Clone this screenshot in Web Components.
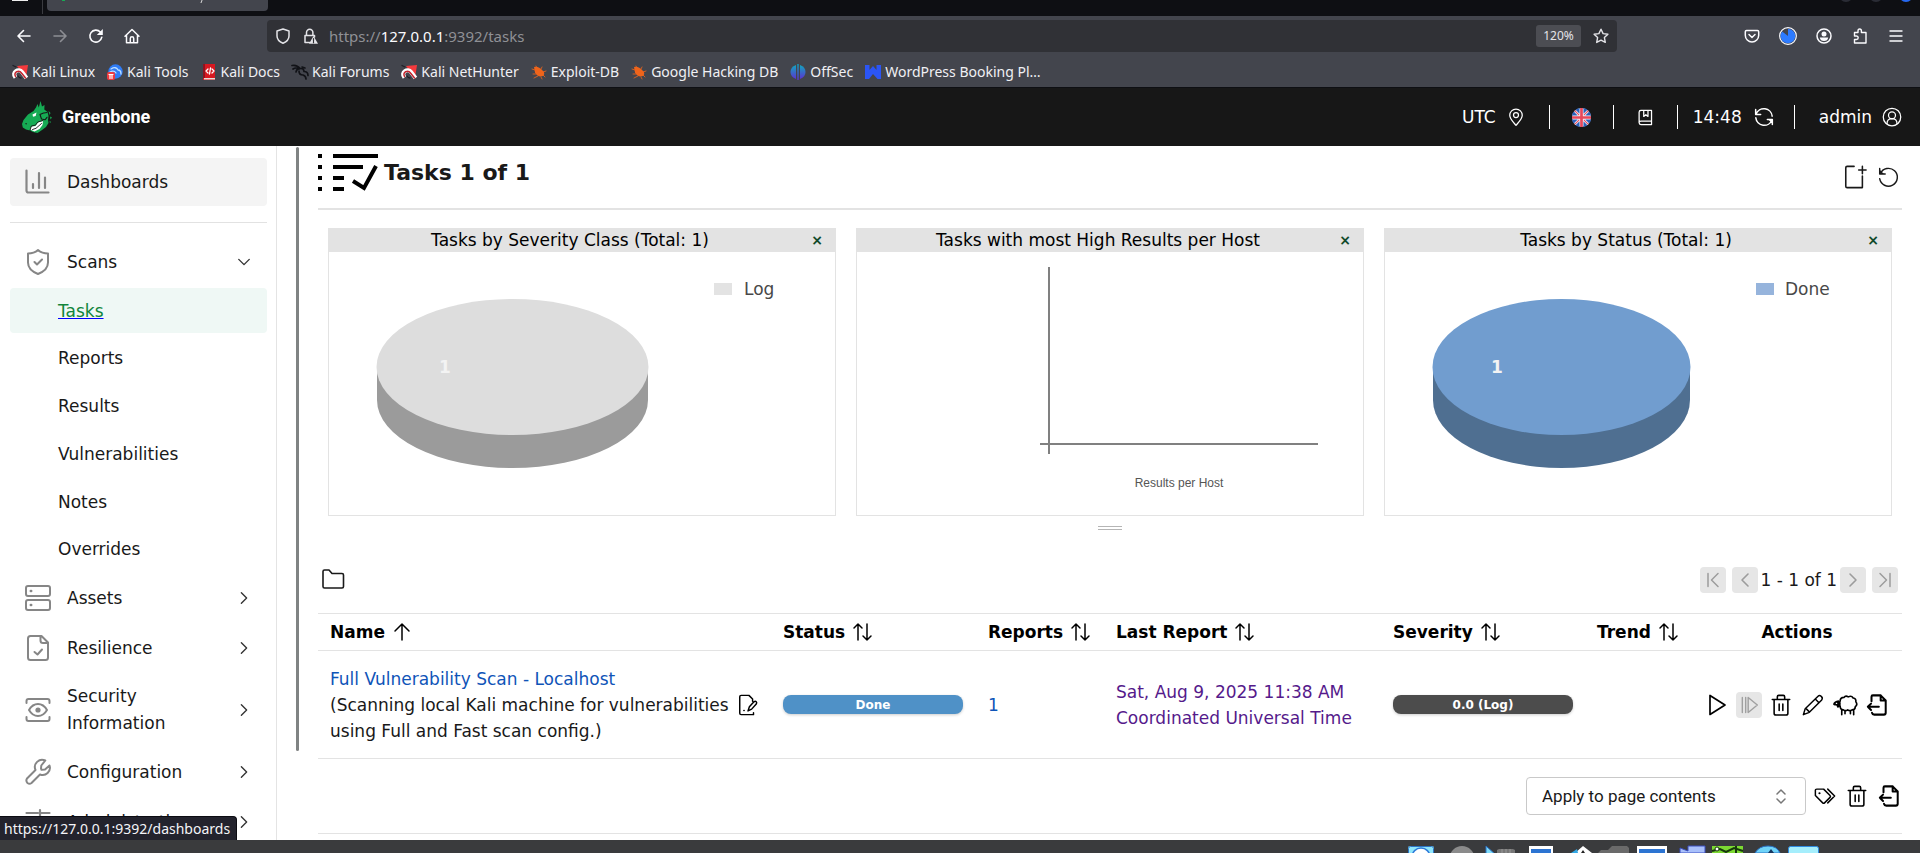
<!DOCTYPE html>
<html lang="en">
<head>
<meta charset="utf-8">
<title>Tasks</title>
<style>
html,body{margin:0;height:100%;overflow:hidden}
body{font:17px/26px "DejaVu Sans",Verdana,sans-serif;color:#191919;background:#fff}
</style>
</head>
<body>
<app-root></app-root>
<script>
const ICONS={
back:'<g stroke-width="1.6"><path d="M14 8H2.5M7.5 2.5 2 8l5.5 5.5"/></g>',
forward:'<g stroke-width="1.6"><path d="M2 8h11.500M8.500 2.500 14 8l-5.500 5.500"/></g>',
reload:'<path stroke-width="1.600" d="M13.800 9.200A6 6 0 1 1 12.300 4"/><path fill="currentColor" stroke="none" d="M14.800 1v6H8.800z"/>',
home:'<path stroke-width="1.500" d="M1 8.200 8 1.500l7 6.700M2.500 7v7.700h11V7M6.300 14.500v-4q0-1.700 1.700-1.700t1.700 1.700v4"/>',
shield:'<path stroke-width="1.500" d="M8 1 14 3v5c0 3.500-3 6-6 7.200C5 14 2 11.500 2 8V3z"/>',
lock:'<path stroke-width="1.500" d="M7.500 14.500H3V7.500h9.500V9M4.500 7.500V4.500a3.200 3.200 0 0 1 6.400 0v3"/><path fill="currentColor" stroke="none" d="M11.500 8 16 15.800H7z"/><path stroke="#303136" stroke-width="1.200" d="M11.500 10.500v2.200m0 1v1"/>',
star:'<path stroke-width="1.400" d="m8 1.200 2.100 4.400 4.800.600-3.500 3.400.900 4.800L8 12.100l-4.300 2.300.900-4.800L1.100 6.200l4.800-.600z"/>',
pocket:'<path stroke-width="1.500" d="M2.500 2.500h11q1.200 0 1.200 1.200v3.500a6.700 6.700 0 0 1-13.400 0V3.700q0-1.200 1.200-1.200zM5 6.500l3 3 3-3"/>',
usage:'<circle cx="8" cy="8" r="7.400" stroke-width="1.100"/><path fill="#2d7bff" stroke="none" d="M8 8V1.500A6.500 6.500 0 1 1 2.800 4z"/>',
account:'<circle cx="8" cy="8" r="7" stroke-width="1.500"/><circle cx="8" cy="6" r="2.500" fill="currentColor" stroke="none"/><path fill="currentColor" stroke="none" d="M3.800 9.500h8.400q-.500 3.500-4.200 3.500T3.800 9.500z"/>',
puzzle:'<path stroke-width="1.400" d="M6 4.500V3q0-2 1.700-2t1.700 2v1.500H14V15H2.500v-3.500h2q1.700 0 1.700-1.700T4.500 8h-2V4.500z"/>',
menu:'<path stroke-width="1.400" d="M2 3h12M2 8h12M2 13h12"/>',
kali:'<path fill="#f43a3d" stroke="none" d="M5 2 16 1l-2 13z"/><path stroke="#fff" stroke-width="4.200" stroke-linecap="butt" d="M3.500 13.500C-1 8 7 4 10 8l4.500 6"/><path stroke="#c3242d" stroke-width="1.500" d="M3.500 12.500C1 8 7 5.500 9.500 9l4 5"/><path stroke="#201f26" stroke-width="1.300" d="M1 1.500l3 1.500M6 12q1 2 3 2"/>',
tools:'<circle cx="8.500" cy="7.500" r="7.200" fill="#2f7cf6" stroke="none"/><path stroke="#bfe0ff" stroke-width="1.300" d="M4 5q5-3 7 1 3 0 3 4M3 8q4-2 6 1"/><rect y="8" width="8" height="8" rx="2" fill="#ee3a3f" stroke="none"/><path stroke="#fff" stroke-width="1.200" d="M2 10.500h4M3 10.500v4M5 10.500v4"/>',
docs:'<path fill="#d81820" stroke="none" d="M2 0h12v16H2z"/><path fill="#8d1420" stroke="none" d="M2 0h2v14H2z"/><path fill="#eadbd6" stroke="none" d="M3 14h11v1.500H3z"/><path stroke="#fff" stroke-width="1.300" d="M7 5 5 7l2 2m4-4 2 2-2 2M9.500 4 8.500 10"/>',
dragon:'<path stroke="#111217" stroke-width="1.700" d="M0 1.500q5-1 8 3M1 5q3-2 6 0M4 8q1-4 5-3.500 3 0 3 3 4 0 4 4M7 7q0 4 4 4 3 1 3 4M10 3l3 1"/>',
exploit:'<path fill="#f0641b" stroke="none" d="M3 3q5-1 10 5 1 4-3 4.500-4 0-6-4z"/><path stroke="#f0641b" stroke-width=".8" d="M6 4 5 2m5 3 1-2m1 5 3-1m-3 4 2 2m-4 0 1 2M4 6 1 5m4 5-3 0m5 2-4 2"/>',
offsec:'<defs><linearGradient id="g" x2="0" y2="1"><stop stop-color="#12a5bf"/><stop offset="1" stop-color="#5b33d0"/></linearGradient></defs><g stroke="none" fill="url(#g)"><path d="M6 1v14Q.500 13 .500 8T6 1z"/><path d="M10 1v14q5.500-2 5.500-7T10 1z"/><path d="M7.300 0h1.400v16H7.300z"/></g>',
wp:'<path fill="#2b55f5" stroke="none" d="M0 1h4.500v5L8 2l3.500 4V1H16v14h-3.500L8 10l-4 5H0z"/>',
pin:'<path stroke-width="1.500" d="M12 22c-3-3.500-7.500-7.500-7.500-12a7.500 7.500 0 0 1 15 0c0 4.500-4.500 8.500-7.500 12z"/><circle cx="12" cy="9.700" r="3" stroke-width="1.500"/>',
flag:'<g stroke="none"><circle cx="12" cy="12" r="12" fill="#f4f6fb"/><path fill="#2b5fb8" d="M14.500 0q3 .500 5 2.200l-5 5zM9.500 0q-3 .500-5 2.200l5 5zM14.500 24q3-.500 5-2.200l-5-5zM9.500 24q-3-.500-5-2.200l5-5zM24 9.500q-.500-3-2.200-5l-5 5zM24 14.500q-.500 3-2.200 5l-5-5zM0 9.500q.500-3 2.200-5l5 5zM0 14.500q.500 3 2.200 5l5-5z"/></g><path stroke="#e8475a" stroke-linecap="butt" stroke-width="3.400" d="M12 0v24M0 12h24"/><path stroke="#e8475a" stroke-width="1.300" d="m3.700 3.700 5 5m11.600-5-5 5m-11.600 11.600 5-5m11.600 5-5-5"/>',
book:'<path stroke-width="1.800" d="M5.500 2H20.500v20H5.500a2.500 2.500 0 0 1-2.500-2.500v-15A2.500 2.500 0 0 1 5.500 2zM3 19.500A2.500 2.500 0 0 1 5.500 17H20.500M9.500 2.500v8l3-2.500 3 2.500v-8"/>',
sync:'<path stroke-width="1.800" d="M2 3v6h6M2.500 8.500A10 10 0 0 1 21.800 11M22 21v-6h-6M21.500 15.500A10 10 0 0 1 2.200 13"/><path fill="currentColor" stroke="none" d="M22.500 14.500v6l-6-6z"/>',
user:'<circle cx="12" cy="12" r="10.500" stroke-width="1.500"/><circle cx="12" cy="10" r="4.200" stroke-width="1.500"/><path stroke-width="1.500" d="M6 20q0-6 6-6t6 6"/>',
horse:'<path fill="#16ab54" stroke="none" d="M0 23 1.500 19 6 13.500 11.500 10 14 6.500 15.500 3 16.800 6.500 18.500 0 20 5.500 22.500 4 22.300 8.500 25.500 11 26.500 15 26 19 26.500 22 24 26 20 29 15.500 32 11 31 8 29.500 4 28.500.800 26.500z"/><path fill="#16ab54" stroke="none" d="m26.500 10 2 2-.8 2zM28 15.500l2 1-1.500 2zM27.500 20l1.500.800-1 1.500z"/><path stroke="#171717" stroke-width="1.100" d="m21.500 12-3.500 1.500 1.500 4.500 3.500.800 2-2.500M22 12l3-.500"/><path fill="#fff" stroke="none" d="m10.500 13.500 4-2-.800 3.500-2.700.800zM8 28.500l1.500-3 4-.500 2.500-3.500 5-1.500-.500 4-3 4-5 2.500z"/><path stroke="#171717" stroke-width=".9" d="M8 29.500 9.300 25l4-.800 2.500-3.200 5-1.500M10.500 28.500l3.500-1.200 5.500-4.800"/><path fill="#171717" stroke="none" d="m3 22.500 2-.500-.800 1.800z"/>',
chart:'<path stroke-width="2.200" d="M1.500 1.500v20q0 2 2 2h20M8 19v-4m6 4V4m6 15V8.500"/>',
scan:'<path stroke-width="2" d="M13 1q4 3.500 10 3.500v9c0 6-5 9.500-10 11.500C8 23 3 19.500 3 13.500v-9Q9 4.500 13 1zM9.500 13l2.500 2.500 5-5"/>',
assets:'<rect x="1" y="1" width="24" height="10" rx="2" stroke-width="2"/><rect x="1" y="15" width="24" height="10" rx="2" stroke-width="2"/><path stroke-width="2.500" d="M5.800 6h.400m-.400 14h.400"/>',
resil:'<path stroke-width="2" d="M16.500 1H5.500Q3 1 3 3.500v19Q3 25 5.500 25h15q2.500 0 2.500-2.500v-15zM15.500 1v4.500q0 2.500 2.500 2.500h5M9.500 17l3 2.500 4.500-5"/>',
eye:'<path stroke-width="2" d="M1.500 6V4q0-2 2-2h19q2 0 2 2v2M1.500 20v2q0 2 2 2h19q2 0 2-2v-2M4 13q3.500-6 9-6t9 6q-3.500 6-9 6t-9-6z"/><circle cx="13" cy="13" r="2.600" fill="currentColor" stroke="none"/>',
wrench:'<path stroke-width="2" d="m16 9.500.300-3 4-5A7.300 7.300 0 0 0 10.500 11L2 19.500Q.500 22 2.500 24q2 1.500 4 0L15 15.500A7.200 7.200 0 0 0 24.500 6.500L20 10.500l-3.500.300z"/>',
admin:'<path stroke-width="2.200" d="M1.500 4H13m3 0h8.500M15 1v6M1.500 13H8m4 0h12.500M10 10v6M1.500 22H15m4 0h5.500M17 19v6"/>',
down:'<path stroke-width="1.600" d="m2 5 6 6 6-6"/>',
right:'<path stroke-width="1.600" d="m5 2 6 6-6 6"/>',
left:'<path stroke-width="1.600" d="m11 2-6 6 6 6"/>',
first:'<path stroke-width="1.500" d="M3 1.500v13M13 1.500 6.500 8 13 14.500"/>',
last:'<path stroke-width="1.500" d="M13 1.500v13M3 1.500 9.500 8 3 14.500"/>',
addfile:'<path stroke-width="1.700" d="M12 1.500H4.500Q3 1.500 3 3v20q0 1.500 1.500 1.500H21V12M21 1.500v8M17 5.500h8"/>',
refresh:'<path stroke-width="1.700" d="M2 3v6.500h6.500M2.800 9a10.500 10.500 0 1 1-.800 6"/><path fill="currentColor" stroke="none" d="M2 4.500v5h5z"/>',
tasks:'<g stroke="#000" stroke-width="4" stroke-linecap="butt" stroke-linejoin="miter"><path d="M0 3h4M0 14h4M0 25h4M0 36h4M15 3h45M15 14h30M15 25h11M15 36h11M35 28l11 7 12-22"/></g>',
folder:'<path stroke-width="1.600" d="M2 18.500V3.500Q2 2 3.500 2H8l3 3.500h10q1.500 0 1.500 1.500v11.500q0 1.500-1.500 1.500H3.500Q2 20 2 18.500z"/>',
up:'<path stroke-width="1.500" d="M10 18V2M3 9l7-7 7 7"/>',
sort:'<path stroke-width="1.500" d="M6 18V2M2 6l4-4 4 4M15 2v16M11 14l4 4 4-4"/>',
note:'<path stroke-width="1.600" d="M17 5.500 13 1.500H4.500Q3 1.500 3 3v18q0 1.500 1.500 1.500H18V20.500M17 5.500V8M12 18.500l1.500-4.500 5-5.500q1.500-1 2.500 0t0 2.500L16 16.500zM7.500 18h.300"/>',
play:'<path stroke-width="1.700" d="M5 2.500v19L20 12z"/>',
resume:'<path stroke-width="1.700" d="M4 3v18M8 3v18M11 3v18l11-9z"/>',
trash:'<path stroke-width="1.700" d="M2.500 6h19M8 6V3q0-1.500 1.500-1.500h5Q16 1.500 16 3v3M4.500 6v15q0 2 2 2h11q2 0 2-2V6M10 11v7M14 11v7"/>',
pencil:'<path stroke-width="1.600" d="m1.500 22.500 2-6.500L17.500 2.500q1.500-1.500 3.500 0t.500 4L8 20zM14.500 5.500l4 4M5 16.500l3 3"/>',
sheep:'<path stroke-width="1.500" d="M7.500 8.500q0-3.500 3.500-3.500 1.500-2 4-.500 3-1.500 4.500 1 3 .500 2.500 3.500 2 2.500-.500 4.500 0 3-3 3-2 1.500-4 0-2 1.500-4 0-3 0-3-3.500M9 17v4m3-3.500V20m5-2.500V20m3-3v4"/><path fill="currentColor" stroke="none" d="M1 11q1-3 5-3.500 2.500 1 2 4-.500 3-3 3l-1-2q-3 0-3-1.500z"/><path stroke="#fff" stroke-width="1.100" d="M4 10.500h.300"/>',
export:'<path stroke-width="2.200" d="M6 8V3q0-1.500 1.500-1.500H16L21.500 7v13.500q0 2-2 2H9q-2 0-2.500-2M16 1.500V7h5.500M14 14H2m3.500-3.500L2 14l3.500 3.500"/>',
tags:'<path stroke-width="1.600" d="M1.500 5.500v6l8 8q1 1 2 0l6-6q1-1 0-2l-7-7H3q-1.500 0-1.500 1zM15 4.500l7.500 7.500-7.500 7.500"/><circle cx="6" cy="9" r="1.200" fill="currentColor" stroke="none"/>',
updown:'<path stroke-width="1.500" d="m4 6 4-4 4 4M4 11l4 4 4-4"/>'
};
const BOX={pin:24,flag:24,book:24,sync:24,user:24,chart:26,scan:26,assets:26,resil:26,eye:26,wrench:26,admin:26,addfile:26,refresh:26,folder:24,up:20,sort:20,note:24,play:24,resume:24,trash:24,pencil:24,sheep:24,export:24,tags:24,updown:17};

function define(name,html){
  const t=document.createElement('template');
  t.innerHTML=html;
  customElements.define(name,class extends HTMLElement{
    constructor(){super();this.attachShadow({mode:'open'}).append(t.content.cloneNode(true))}
  });
}

customElements.define('ui-icon',class extends HTMLElement{
  connectedCallback(){
    if(this.shadowRoot)return;
    const n=this.getAttribute('name'),w=this.getAttribute('width')||this.getAttribute('size')||16,h=this.getAttribute('size')||16,b=BOX[n]||16;
    const vb=this.getAttribute('box')||`0 0 ${b} ${b}`;
    this.attachShadow({mode:'open'}).innerHTML=`<style>:host{display:inline-flex;flex:none;width:${w}px;height:${h}px}svg{display:block;width:100%;height:100%;overflow:visible}</style><svg aria-hidden="true" viewBox="${vb}" fill="none" stroke="currentColor" stroke-linecap="round" stroke-linejoin="round">${ICONS[n]}</svg>`;
  }
});

define('browser-tabs',`<style>
:host{display:flex;height:16px;background:#0e0f13;overflow:hidden;position:relative}
.win{width:16px;height:1px;background:#eee;margin-left:12px}
.line{width:1px;height:14px;margin:0 4px 0 14px;background:#3a3b40}
.tab{width:221px;height:11px;background:#43454d;border-radius:0 0 4px 4px;display:flex}
.dot{width:3px;height:1px;margin-left:15px;background:#16ab54}
.tail{width:1px;height:3px;margin-left:136px;background:#ddd;transform:skewX(-20deg)}
.btns{margin-left:auto;display:flex;gap:16px;padding-right:7px}
.btns i{width:14px;height:14px;margin-top:-12px;border-radius:50%;background:#2a2c35}
.btns i:last-child{background:#2668f0}
</style><span class="win"></span><span class="line"></span><div class="tab"><span class="dot"></span><span class="tail"></span></div><div class="btns"><i></i><i></i><i></i></div>`);

define('browser-toolbar',`<style>
:host{display:flex;align-items:center;box-sizing:border-box;height:41px;background:#43454d;color:#fbfbfe;font:15px/20px "Noto Sans",sans-serif;padding:0 16px 1px}
button{all:unset;display:flex;cursor:pointer}
.nav{display:flex;gap:20px;flex:1;max-width:235px}
.nav button:nth-child(2){opacity:.4}
.url{flex:0 1 1350px;width:1350px;box-sizing:border-box;height:32px;border-radius:4px;background:#303136;display:flex;align-items:center;padding:0 8px;margin:0 auto 0 16px;color:#8f9095}
.url b{font-weight:400;color:#fbfbfe}
.url ui-icon,.url button{color:#e4e4e8}
.field{flex:1;outline:0;padding-left:11px}
.lock{margin-left:11px}
.zoom{font-size:12px;height:22px;padding:0 6px;width:33px;justify-content:center;align-items:center;background:#4c4d53;border-radius:3px;margin-right:12px}
.tools{display:flex;gap:20px;align-items:center}
.tools button{width:16px;justify-content:center}
</style>
<div class="nav"><button aria-label="Back"><ui-icon name="back"></ui-icon></button><button aria-label="Forward"><ui-icon name="forward"></ui-icon></button><button aria-label="Reload"><ui-icon name="reload"></ui-icon></button><button aria-label="Home"><ui-icon name="home"></ui-icon></button></div>
<div class="url"><ui-icon name="shield"></ui-icon><ui-icon class="lock" name="lock"></ui-icon><div class="field" role="textbox" aria-label="Address" contenteditable="true" spellcheck="false">https://<b>127.0.0.1</b>:9392/tasks</div><button class="zoom">120%</button><button aria-label="Bookmark"><ui-icon name="star"></ui-icon></button></div>
<div class="tools"><button aria-label="Pocket"><ui-icon name="pocket"></ui-icon></button><button aria-label="Usage"><ui-icon name="usage" size="18"></ui-icon></button><button aria-label="Account"><ui-icon name="account"></ui-icon></button><button aria-label="Extensions"><ui-icon name="puzzle"></ui-icon></button><button aria-label="Menu"><ui-icon name="menu"></ui-icon></button></div>`);

define('bookmarks-bar',`<style>
:host{display:flex;align-items:center;gap:12px;height:31px;box-sizing:border-box;padding:0 12px 1px;background:#43454d;border-bottom:1px solid #0e0f13;color:#f0f0f4;font:14px/20px "Noto Sans",sans-serif}
a{display:flex;align-items:center;gap:4px;color:inherit;text-decoration:none;white-space:nowrap}
</style>
<a href="#"><ui-icon name="kali"></ui-icon>Kali Linux</a><a href="#"><ui-icon name="tools"></ui-icon>Kali Tools</a><a href="#"><ui-icon name="docs"></ui-icon>Kali Docs</a><a href="#"><ui-icon name="dragon"></ui-icon>Kali Forums</a><a href="#"><ui-icon name="kali"></ui-icon>Kali NetHunter</a><a href="#"><ui-icon name="exploit"></ui-icon>Exploit-DB</a><a href="#"><ui-icon name="exploit"></ui-icon>Google Hacking DB</a><a href="#"><ui-icon name="offsec"></ui-icon>OffSec</a><a href="#"><ui-icon name="wp"></ui-icon>WordPress Booking Pl…</a>`);

define('gsa-header',`<style>
:host{display:flex;align-items:center;justify-content:space-between;height:58px;flex:none;background:#171717;color:#fff;padding:0 18px 0 22px}
.brand{display:flex;align-items:center;gap:10px;font:700 18px/24px Roboto,sans-serif}
.right{display:flex;align-items:center}
.right>*{display:flex;align-items:center;justify-content:center}
button{all:unset;cursor:pointer}
.sep{width:1px;height:24px;background:#fff}
.tz{gap:10px;margin-right:23px}
.lang,.man{width:63px}
.time{gap:12px;padding:0 20px 0 15px}
.who{gap:10px;padding-left:24px}
</style>
<div class="brand"><ui-icon name="horse" width="30" size="32" box="0 0 30 32"></ui-icon><span>Greenbone</span></div>
<div class="right"><button class="tz">UTC<ui-icon name="pin" size="20"></ui-icon></button><span class="sep"></span><button class="lang" aria-label="Language"><ui-icon name="flag" size="19"></ui-icon></button><span class="sep"></span><button class="man" aria-label="Manual"><ui-icon name="book" size="17"></ui-icon></button><span class="sep"></span><button class="time">14:48<ui-icon name="sync" size="20"></ui-icon></button><span class="sep"></span><button class="who">admin<ui-icon name="user" size="20"></ui-icon></button></div>`);

define('nav-item',`<style>
:host{display:flex;flex:none;align-items:center;box-sizing:border-box;min-height:48px;padding:9px 16px 9px 15px;border-radius:4px;line-height:27px}
:host([active]){background:#f4f4f4}
::slotted(ui-icon[slot=icon]){color:#868686}
.t{flex:1;margin-left:16px;max-width:150px}
::slotted(ui-icon[slot=end]){margin-left:auto;color:#333}
</style><slot name="icon"></slot><span class="t"><slot></slot></span><slot name="end"></slot>`);

define('nav-link',`<style>
:host{display:flex;flex:none;align-items:center;height:45px;padding-left:48px;border-radius:4px}
:host([active]){background:#eff8f5}
a{color:inherit;text-decoration:none}
:host([active]) a{color:#11853b;text-decoration:underline #00f}
</style><a href="#"><slot></slot></a>`);

define('side-nav',`<style>
:host{display:flex;flex-direction:column;flex:none;box-sizing:border-box;width:277px;padding:12px 9px 0 10px;gap:2px;border-right:1px solid #e4e4e4;overflow:hidden}
hr{flex:none;width:100%;border:0;height:1px;background:#e2e2e2;margin:14px 0 13px}
.sub{display:flex;flex-direction:column;justify-content:space-between;flex:none;height:284px}
</style>
<nav-item active><ui-icon slot="icon" name="chart" size="26"></ui-icon>Dashboards</nav-item><hr>
<nav-item><ui-icon slot="icon" name="scan" size="26"></ui-icon>Scans<ui-icon slot="end" name="down" size="14"></ui-icon></nav-item>
<div class="sub"><nav-link active>Tasks</nav-link><nav-link>Reports</nav-link><nav-link>Results</nav-link><nav-link>Vulnerabilities</nav-link><nav-link>Notes</nav-link><nav-link>Overrides</nav-link></div>
<nav-item><ui-icon slot="icon" name="assets" size="26"></ui-icon>Assets<ui-icon slot="end" name="right" size="14"></ui-icon></nav-item>
<nav-item><ui-icon slot="icon" name="resil" size="26"></ui-icon>Resilience<ui-icon slot="end" name="right" size="14"></ui-icon></nav-item>
<nav-item><ui-icon slot="icon" name="eye" size="26"></ui-icon>Security<br>Information<ui-icon slot="end" name="right" size="14"></ui-icon></nav-item>
<nav-item><ui-icon slot="icon" name="wrench" size="26"></ui-icon>Configuration<ui-icon slot="end" name="right" size="14"></ui-icon></nav-item>
<nav-item><ui-icon slot="icon" name="admin" size="26"></ui-icon>Administration<ui-icon slot="end" name="right" size="14"></ui-icon></nav-item>`);

define('page-title',`<style>
:host{display:flex;align-items:center;justify-content:space-between;height:61px;border-bottom:2px solid #e3e3e3}
h1{display:flex;align-items:center;gap:6px;margin:-10px 0 0;font-size:22px;line-height:28px;height:42px}
.a{display:flex;gap:8px;margin-top:-2px}
button{all:unset;display:flex;width:26px;height:26px;align-items:center;justify-content:center;cursor:pointer}
</style><h1><ui-icon name="tasks" width="60" size="39" box="0 0 60 39"></ui-icon><slot></slot></h1><div class="a"><button aria-label="New Task"><ui-icon name="addfile" size="24"></ui-icon></button><button aria-label="Reload"><ui-icon name="refresh" size="22"></ui-icon></button></div>`);

define('dashboard-card',`<style>
:host{display:block;flex:1;min-width:0;border:1px solid #e3e3e3;border-top:0}
header{display:flex;align-items:center;height:24px;background:#e3e3e3;color:#000;line-height:24px}
h2{flex:1;margin:0;font-size:inherit;font-weight:400;text-align:center}
button{all:unset;width:12px;margin-right:12px;text-align:center;font-size:14px;font-weight:700;color:#0f4a29;cursor:pointer}
</style><header><h2><slot name="title"></slot></h2><button aria-label="Remove">×</button></header><slot></slot>`);

const chartStyle='<style>:host{display:block}svg{display:block;width:100%;height:auto}text{font-size:17px;fill:#484848}.n{font-weight:700;fill:#f3f3f3;text-anchor:middle}</style>';
define('severity-chart',chartStyle+`<svg viewBox="0 0 506 263"><path fill="#9b9b9b" d="M48 115v33a135.500 68 0 0 0 271 0v-33z"/><ellipse cx="183.500" cy="115" rx="136" ry="68" fill="#ddd"/><text class="n" x="116" y="121">1</text><path fill="#e3e3e3" d="M385 31h18v12h-18z"/><text x="415" y="43">Log</text></svg>`);
define('status-chart',chartStyle+`<svg viewBox="0 0 506 263"><path fill="#4f6f91" d="M48 115v33a128.500 68 0 0 0 257 0v-33z"/><ellipse cx="176.500" cy="115" rx="129" ry="68" fill="#719dcf"/><text class="n" x="112" y="121">1</text><path fill="#96b4dc" d="M371 31h18v12h-18z"/><text x="400" y="43">Done</text></svg>`);
define('host-chart',`<style>:host{display:block}svg{display:block;width:100%;height:auto}text{font:12px "Liberation Sans",Arial,sans-serif;fill:#555;text-anchor:middle}</style><svg viewBox="0 0 506 263"><path stroke="#808080" stroke-width="2" d="M192 15v187M183 192h278"/><text x="322" y="235">Results per Host</text></svg>`);

define('page-pager',`<style>
:host{display:flex;align-items:center;gap:6px}
button{all:unset;display:flex;align-items:center;justify-content:center;width:26px;height:26px;border-radius:4px;background:#e6e6e6;color:#9c9c9c}
span{margin:0 -3px 0 -4px}
</style><button disabled aria-label="First"><ui-icon name="first" size="16"></ui-icon></button><button disabled aria-label="Previous"><ui-icon name="left" size="16"></ui-icon></button><span>1 - 1 of 1</span><button disabled aria-label="Next"><ui-icon name="right" size="16"></ui-icon></button><button disabled aria-label="Last"><ui-icon name="last" size="16"></ui-icon></button>`);

define('status-bar',`<style>
:host{display:block;width:180px;height:19px;border-radius:8px;background:var(--bar);color:#fff;font-size:12px;font-weight:700;line-height:21px;text-align:center;box-shadow:0 1px 3px #0003}
</style><slot></slot>`);

define('task-table',`<style>
:host{display:block}
table{width:100%;table-layout:fixed;border-collapse:collapse;border-top:1px solid #e3e3e3}
th,td{padding:0 12px;text-align:left;border-bottom:1px solid #e3e3e3}
th{height:36px;color:#000}
th button{all:unset;display:flex;align-items:center;gap:7px;cursor:pointer}
th:last-child{text-align:center}
td{height:107px}
a{color:#0f54b8;text-decoration:none}
a.v{color:#551a8b}
.name{display:flex;align-items:center;justify-content:space-between}
.acts{display:flex;gap:6px;justify-content:center}
.acts button,.name button{all:unset;display:flex;align-items:center;justify-content:center;width:26px;height:26px;border-radius:4px;cursor:pointer;color:#000}
.acts button[disabled]{background:#e6e6e6;color:#a0a0a0}
.name button{width:22px}
td:last-child,th:last-child{padding:0 10px}
</style>
<table><colgroup><col><col style="width:205px"><col style="width:128px"><col style="width:277px"><col style="width:204px"><col style="width:107px"><col style="width:210px"></colgroup>
<thead><tr><th><button>Name<ui-icon name="up" size="20"></ui-icon></button></th><th><button>Status<ui-icon name="sort" size="20"></ui-icon></button></th><th><button>Reports<ui-icon name="sort" size="20"></ui-icon></button></th><th><button>Last Report<ui-icon name="sort" size="20"></ui-icon></button></th><th><button>Severity<ui-icon name="sort" size="20"></ui-icon></button></th><th><button>Trend<ui-icon name="sort" size="20"></ui-icon></button></th><th>Actions</th></tr></thead>
<tbody><tr><td><div class="name"><div><a href="#">Full Vulnerability Scan - Localhost</a><br>(Scanning local Kali machine for vulnerabilities<br>using Full and Fast scan config.)</div><button aria-label="Alterable task"><ui-icon name="note" size="22"></ui-icon></button></div></td>
<td><status-bar style="--bar:#4f91c7">Done</status-bar></td><td><a href="#">1</a></td><td><a class="v" href="#">Sat, Aug 9, 2025 11:38 AM<br>Coordinated Universal Time</a></td><td><status-bar style="--bar:#4c4c4c">0.0 (Log)</status-bar></td><td></td>
<td><div class="acts"><button aria-label="Start"><ui-icon name="play" size="24"></ui-icon></button><button disabled aria-label="Resume"><ui-icon name="resume" size="20"></ui-icon></button><button aria-label="Delete"><ui-icon name="trash" size="22"></ui-icon></button><button aria-label="Edit"><ui-icon name="pencil" size="22"></ui-icon></button><button aria-label="Clone"><ui-icon name="sheep" size="26"></ui-icon></button><button aria-label="Export"><ui-icon name="export" size="22"></ui-icon></button></div></td></tr></tbody></table>`);

define('bulk-actions',`<style>
:host{display:flex;align-items:center;justify-content:flex-end;gap:6px;height:74px;border-bottom:1px solid #e3e3e3}
label{position:relative;display:block;width:280px;height:38px}
select{appearance:none;box-sizing:border-box;width:100%;height:100%;margin:0;padding:0 15px;border:1px solid #c9c9c9;border-radius:4px;background:#fff;color:#191919;font:17px/24px Roboto,sans-serif}
label ui-icon{position:absolute;right:16px;top:11px;color:#777}
button{all:unset;display:flex;align-items:center;justify-content:center;width:26px;height:26px;color:#000;cursor:pointer}
</style><label><select aria-label="Apply to"><option>Apply to page contents</option></select><ui-icon name="updown" size="17"></ui-icon></label><button aria-label="Add tag"><ui-icon name="tags" size="22"></ui-icon></button><button aria-label="Delete"><ui-icon name="trash" size="22"></ui-icon></button><button aria-label="Export"><ui-icon name="export" size="22"></ui-icon></button>`);

define('task-page',`<style>
:host{display:flex;flex:1;min-width:0;padding:1px 18px 0 19px;overflow:hidden}
.thumb{flex:none;width:3px;height:604px;border-radius:2px;background:#808383;margin-right:19px}
main{flex:1;min-width:0}
.cards{display:flex;gap:20px;padding:18px 10px 0}
.grip{box-sizing:border-box;width:24px;height:4px;border:solid #b5b5b5;border-width:1px 0;margin:10px auto 37px}
.bar{display:flex;align-items:center;justify-content:space-between;padding:0 4px 0 3px;margin-bottom:20px}
.bar button{all:unset;display:flex}
</style><span class="thumb"></span>
<main><page-title>Tasks 1 of 1</page-title>
<div class="cards"><dashboard-card><span slot="title">Tasks by Severity Class (Total: 1)</span><severity-chart></severity-chart></dashboard-card><dashboard-card><span slot="title">Tasks with most High Results per Host</span><host-chart></host-chart></dashboard-card><dashboard-card><span slot="title">Tasks by Status (Total: 1)</span><status-chart></status-chart></dashboard-card></div>
<div class="grip"></div>
<div class="bar"><button aria-label="Folder"><ui-icon name="folder" size="24"></ui-icon></button><page-pager></page-pager></div>
<task-table></task-table><bulk-actions></bulk-actions></main>`);

define('desktop-panel',`<style>
:host{display:flex;justify-content:flex-end;height:13px;flex:none;overflow:hidden;background:#3a3b3d;padding-right:101px}
svg{display:block;width:411px;height:13px}
</style><svg viewBox="0 0 411 13" aria-hidden="true"><rect y="6" width="26" height="12" rx="2" fill="#8fe6fb"/><rect x=".500" y="6.500" width="25" height="12" rx="2" fill="none" stroke="#2e74c4"/><circle cx="13" cy="17" r="9" fill="#fff" stroke="#2f7bd9" stroke-width="1.500"/><circle cx="54" cy="18.500" r="12.500" fill="#8b8b8b"/><path d="M78 6l10 9H78z" fill="#7fdcfa" stroke="#2a70c4"/><path d="M89 13v-3l2-1h14l2 1v3z" fill="#777"/><path d="M94 9v4m4-4v4m4-4v4" stroke="#999"/><path d="M121 6h24v9h-24z" fill="#fff"/><path d="M123 9h20v6h-20z" fill="#2c74d2"/><path d="M167 13l8-7 9 7z" fill="#fff"/><path d="M163 13l6-4 1 4z" fill="#33a8e5"/><path d="M173 13l2-3 2 3z" fill="#222"/><path d="M190 13l3-3h7l4-4h15l2 2v5z" fill="#6a6a6a"/><path d="M229 6h30v9h-30z" fill="#fff"/><path d="M231 9h26v6h-26z" fill="#2c74d2"/><path d="M272 8l8 3V6h17v7h-25z" fill="#a9c0fb" stroke="#3b4fc0"/><path d="M304 6h31v7h-31z" fill="#7cd932"/><path d="M304 11l8-2 6 3 8-4 9 3M328 6v7" stroke="#17380c" stroke-width="2" fill="none"/><circle cx="309" cy="9" r="2" fill="#fff" stroke="#17380c"/><path d="M347 13q4-7 13-7t12 7z" fill="#6fd3f8" stroke="#2a70c4"/><path d="M360 13l3-4 3 4z" fill="#16365f"/><rect x="380.500" y="6.500" width="30" height="12" rx="2" fill="#a5eefc" stroke="#2e8ae0"/></svg>`);

define('app-root',`<style>
:host{display:flex;flex-direction:column;height:100vh;overflow:hidden;background:#fff}
.view{position:relative;display:flex;flex:1;min-height:0}
browser-tabs,browser-toolbar,bookmarks-bar{flex:none}
.status{position:absolute;left:0;bottom:0;box-sizing:border-box;height:24px;padding:0 6px 0 4px;border:solid #0c0c12;border-width:1px 1px 0 0;border-radius:0 4px 0 0;background:#23232d;color:#f4f4f8;font:14px/23px "Noto Sans",sans-serif}
</style><browser-tabs></browser-tabs><browser-toolbar></browser-toolbar><bookmarks-bar></bookmarks-bar><gsa-header></gsa-header><div class="view"><side-nav></side-nav><task-page></task-page><div class="status">https://127.0.0.1:9392/dashboards</div></div><desktop-panel></desktop-panel>`);
</script>
</body>
</html>
